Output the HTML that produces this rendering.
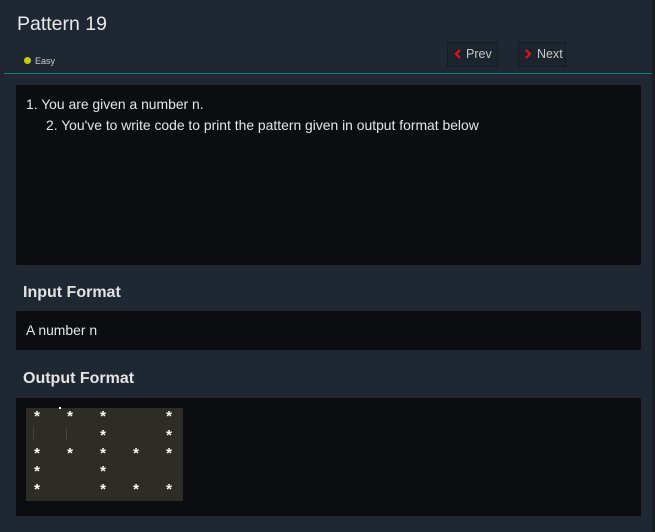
<!DOCTYPE html>
<html><head><meta charset="utf-8"><style>
*{margin:0;padding:0;box-sizing:border-box}
body{width:655px;height:532px;background:#1f2733;font-family:"Liberation Sans",sans-serif;color:#e6e6e6;position:relative;overflow:hidden}
.a{position:absolute}
.box{position:absolute;left:16px;width:625px;background:#0b0d10;border-radius:2px}
.btn{position:absolute;top:42px;height:25px;border:1px solid #151b22;background:#1c242e;color:#c8c8c8;font-size:12.5px;line-height:23px;padding-left:6px}
.btn svg{vertical-align:-1px;margin-right:5px}
h3{position:absolute;left:23px;font-size:16px;font-weight:bold;color:#e3e3e3}
.s{position:absolute;color:#fff;font-size:15px;font-weight:bold;line-height:15px;width:10px;text-align:center}
.t{position:absolute;font-size:13.9px}
</style></head><body>
<div class="a" style="left:17px;top:13px;font-size:19.5px;color:#e8e8e8">Pattern 19</div>
<div class="a" style="left:24px;top:57px;width:7px;height:7px;border-radius:50%;background:#c8cc00"></div>
<div class="a" style="left:35px;top:56px;font-size:9px;color:#ccc">Easy</div>
<div class="btn" style="left:447px;width:51px"><svg width="7" height="10" viewBox="0 0 7 10"><path d="M6 1L2 5L6 9" stroke="#e8101c" stroke-width="2.2" fill="none"/></svg>Prev</div>
<div class="btn" style="left:518px;width:48px"><svg width="7" height="10" viewBox="0 0 7 10"><path d="M1 1L5 5L1 9" stroke="#e8101c" stroke-width="2.2" fill="none"/></svg>Next</div>
<div class="a" style="left:4px;top:73px;width:651px;height:1px;background:#0f7f76"></div>
<div class="a" style="left:652px;top:0;width:3px;height:532px;background:#181e26"></div>
<div class="box" style="top:85px;height:180px"></div>
<div class="t" style="left:26px;top:96px">1. You are given a number n.</div>
<div class="t" style="left:46px;top:117px">2. You've to write code to print the pattern given in output format below</div>
<h3 style="top:284px">Input Format</h3>
<div class="box" style="top:311px;height:39px"></div>
<div class="t" style="left:26px;top:322px">A number n</div>
<h3 style="top:370px">Output Format</h3>
<div class="box" style="top:398px;height:118px"></div>
<div class="a" style="left:26px;top:408px;width:157px;height:93px;background:#2d2d25"></div>
<div class="a" style="left:33px;top:427px;width:1px;height:14px;background:#444"></div>
<div class="a" style="left:66px;top:427px;width:1px;height:14px;background:#444"></div>
<div class="a" style="left:59px;top:407px;width:2px;height:2px;background:#fff"></div>
<div class="s" style="left:32px;top:409px">*</div><div class="s" style="left:65px;top:409px">*</div><div class="s" style="left:98px;top:409px">*</div><div class="s" style="left:164px;top:409px">*</div>
<div class="s" style="left:98px;top:428px">*</div><div class="s" style="left:164px;top:428px">*</div>
<div class="s" style="left:32px;top:446px">*</div><div class="s" style="left:65px;top:446px">*</div><div class="s" style="left:98px;top:446px">*</div><div class="s" style="left:131px;top:446px">*</div><div class="s" style="left:164px;top:446px">*</div>
<div class="s" style="left:32px;top:464px">*</div><div class="s" style="left:98px;top:464px">*</div>
<div class="s" style="left:32px;top:482px">*</div><div class="s" style="left:98px;top:482px">*</div><div class="s" style="left:131px;top:482px">*</div><div class="s" style="left:164px;top:482px">*</div>
</body></html>
